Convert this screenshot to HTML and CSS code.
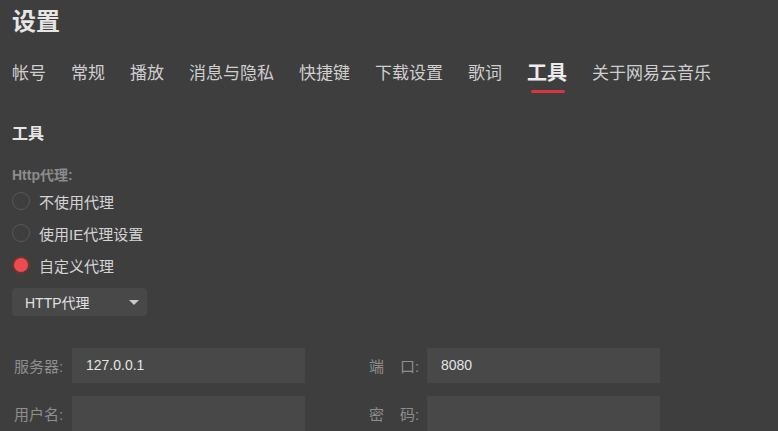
FILE: index.html
```html
<!DOCTYPE html>
<html lang="zh-CN">
<head>
    <meta charset="UTF-8">
    <title>设置</title>
    <link rel="stylesheet" href="styles.css">
</head>
<body>
    <div class="page">
        <h1 class="title">设置</h1>

        <!-- 顶部选项卡 -->
        <div class="tabs">
            <span class="tab">帐号</span>
            <span class="tab">常规</span>
            <span class="tab">播放</span>
            <span class="tab">消息与隐私</span>
            <span class="tab">快捷键</span>
            <span class="tab">下载设置</span>
            <span class="tab">歌词</span>
            <span class="tab active">工具</span>
            <span class="tab">关于网易云音乐</span>
        </div>

        <h2 class="section-title">工具</h2>
        <div class="label">Http代理:</div>

        <div class="radio-list">
            <label class="radio"><span class="dot"></span>不使用代理</label>
            <label class="radio"><span class="dot"></span>使用IE代理设置</label>
            <label class="radio checked"><span class="dot"></span>自定义代理</label>
        </div>

        <div class="select">
            <span>HTTP代理</span>
            <span class="caret"></span>
        </div>

        <!-- 代理服务器表单 -->
        <div class="form">
            <div class="field">
                <span class="field-label">服务器:</span>
                <div class="input">127.0.0.1</div>
            </div>
            <div class="field">
                <span class="field-label">端<i></i>口:</span>
                <div class="input">8080</div>
            </div>
            <div class="field">
                <span class="field-label">用户名:</span>
                <div class="input"></div>
            </div>
            <div class="field">
                <span class="field-label">密<i></i>码:</span>
                <div class="input"></div>
            </div>
        </div>
    </div>
</body>
</html>
```

FILE: styles.css
```css
body {
    margin: 0;
    background-color: #3e3e3e;
    color: #d6d6d6;
    font-family: "Liberation Sans", "Noto Sans CJK SC", sans-serif;
    overflow: hidden;
}

.page {
    padding: 5px 12px 0;
}

.title {
    margin: 0;
    font-size: 24px;
    line-height: 34px;
    font-weight: bold;
    color: #e6e6e6;
}

.tabs {
    display: flex;
    align-items: center;
    gap: 25px;
    margin-top: 15px;
    height: 34px;
}

.tab {
    font-size: 17px;
    color: #cfcfcf;
    position: relative;
}

.tab.active {
    font-size: 20px;
    font-weight: bold;
    color: #ececec;
}

.tab.active::after {
    content: "";
    position: absolute;
    left: 4px;
    right: 2px;
    bottom: -7px;
    height: 3px;
    border-radius: 2px;
    background-color: #d8353c;
}

.section-title {
    margin: 34px 0 0;
    font-size: 16px;
    line-height: 24px;
    font-weight: bold;
    color: #e6e6e6;
}

.label {
    margin-top: 19px;
    font-size: 14px;
    line-height: 20px;
    font-weight: bold;
    color: #8c8c8c;
}

.radio-list {
    display: flex;
    flex-direction: column;
}

.radio {
    display: flex;
    align-items: center;
    gap: 9px;
    height: 32px;
    font-size: 15px;
    color: #d4d4d4;
}

.dot {
    width: 16px;
    height: 16px;
    border: 1px solid #585858;
    border-radius: 50%;
    box-sizing: content-box;
}

.radio.checked .dot {
    width: 14px;
    height: 14px;
    background-color: #ec4b4f;
    border: 2px solid #6a3434;
}

.select {
    display: flex;
    align-items: center;
    justify-content: space-between;
    width: 135px;
    height: 28px;
    margin-top: 7px;
    padding: 0 8px 0 13px;
    box-sizing: border-box;
    background-color: #484848;
    border-radius: 4px;
    font-size: 14px;
    color: #e0e0e0;
}

.caret {
    width: 0;
    height: 0;
    border-left: 5px solid transparent;
    border-right: 5px solid transparent;
    border-top: 5px solid #c8c8c8;
}

.form {
    display: grid;
    grid-template-columns: 293px 293px;
    column-gap: 62px;
    row-gap: 13px;
    margin-top: 32px;
}

.field {
    display: flex;
    align-items: center;
}

.field-label {
    width: 60px;
    flex: none;
    padding-left: 2px;
    box-sizing: border-box;
    white-space: nowrap;
    font-size: 15px;
    color: #8e8e8e;
}

.field-label i {
    display: inline-block;
    width: 16px;
}

.input {
    flex: 1;
    height: 35px;
    line-height: 35px;
    padding-left: 14px;
    background-color: #484848;
    font-size: 14px;
    color: #e4e4e4;
}
```
